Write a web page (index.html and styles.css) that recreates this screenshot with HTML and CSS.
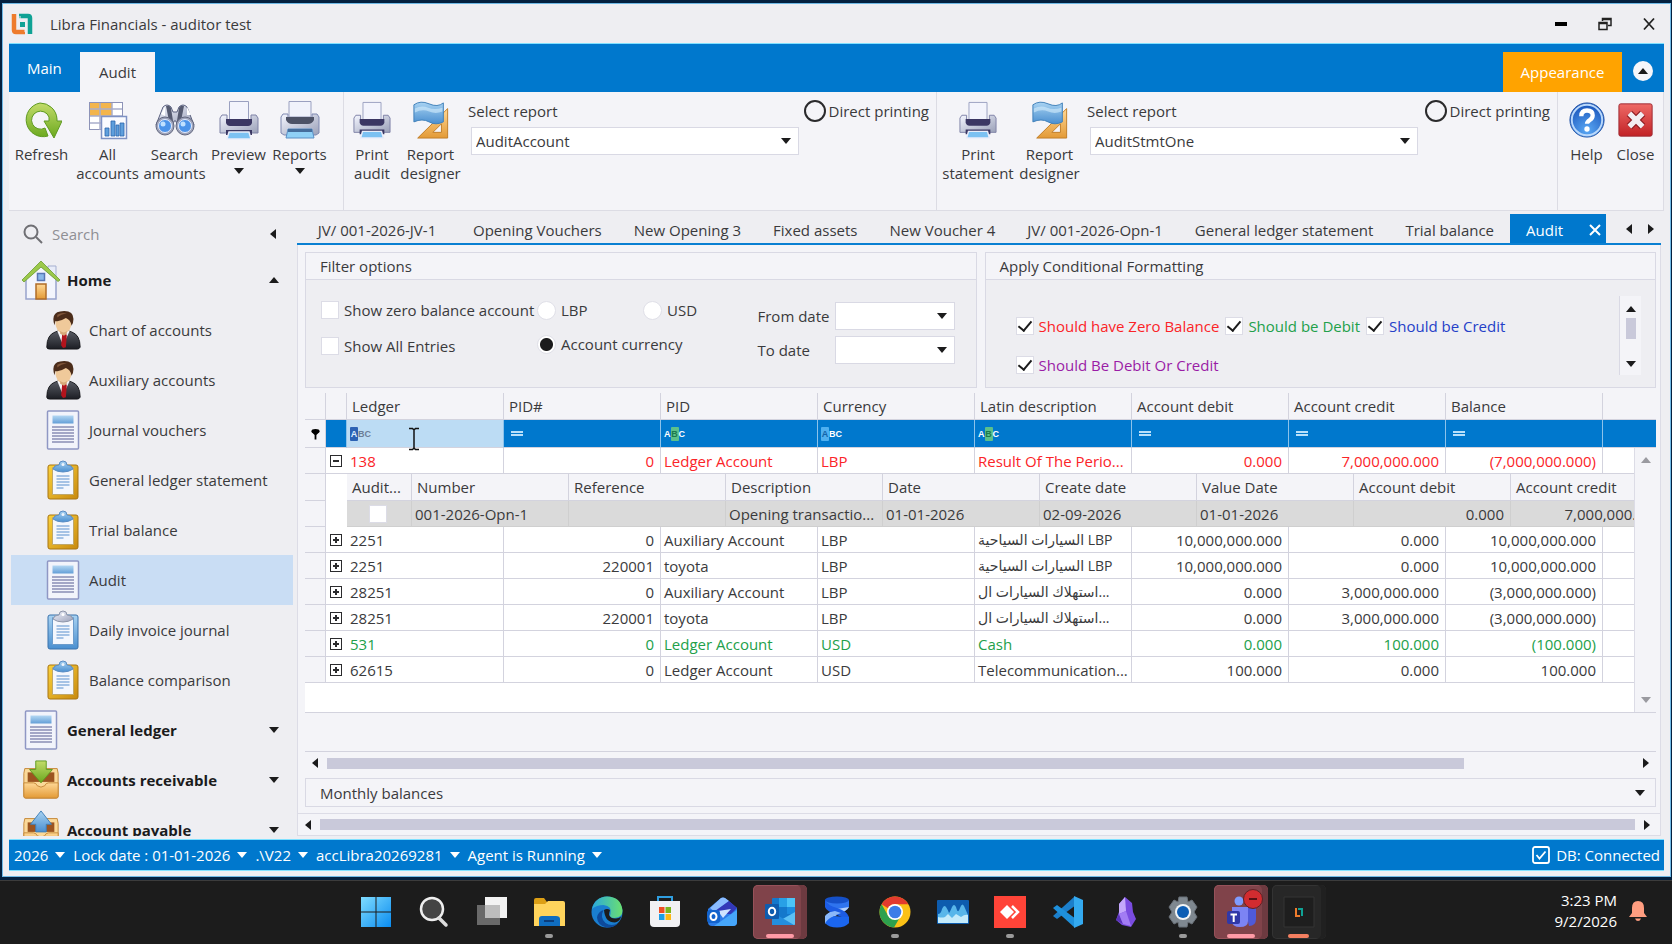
FILE: index.html
```html
<!DOCTYPE html>
<html lang="en">
<head>
<meta charset="utf-8">
<title>Libra Financials - auditor test</title>
<link rel="stylesheet" href="styles.css">
</head>
<body>
<svg class="defs" aria-hidden="true">
  <defs>
    <linearGradient id="gGreen" x1="0" y1="0" x2="0" y2="1"><stop offset="0" stop-color="#c3dc6a"/><stop offset="1" stop-color="#6aa81e"/></linearGradient>
    <linearGradient id="gBlue" x1="0" y1="0" x2="0" y2="1"><stop offset="0" stop-color="#a9d3f2"/><stop offset="1" stop-color="#4a8fd0"/></linearGradient>
    <linearGradient id="gSilver" x1="0" y1="0" x2="1" y2="1"><stop offset="0" stop-color="#f4f6ff"/><stop offset="1" stop-color="#9aa0b8"/></linearGradient>
    <linearGradient id="gOrange" x1="0" y1="0" x2="0" y2="1"><stop offset="0" stop-color="#ffd896"/><stop offset="1" stop-color="#e39a36"/></linearGradient>
    <linearGradient id="gRed" x1="0" y1="0" x2="0" y2="1"><stop offset="0" stop-color="#ee6a66"/><stop offset="1" stop-color="#c22226"/></linearGradient>
    <linearGradient id="gSuit" x1="0" y1="0" x2="0" y2="1"><stop offset="0" stop-color="#5c5f68"/><stop offset="1" stop-color="#1c1e24"/></linearGradient>
    <linearGradient id="gGold" x1="0" y1="0" x2="1" y2="1"><stop offset="0" stop-color="#fbd23c"/><stop offset="1" stop-color="#c88a10"/></linearGradient>
    <linearGradient id="gWin" x1="0" y1="0" x2="1" y2="1"><stop offset="0" stop-color="#7fdcff"/><stop offset="1" stop-color="#0a8cf0"/></linearGradient>
    <linearGradient id="gEdge" x1="0" y1="0" x2="1" y2="0"><stop offset="0" stop-color="#2aa8dc"/><stop offset="1" stop-color="#6be070"/></linearGradient>
    <radialGradient id="gHelp" cx=".5" cy=".8" r=".8"><stop offset="0" stop-color="#5aa8f4"/><stop offset="1" stop-color="#1650b8"/></radialGradient>
  </defs>
  <symbol id="logo" viewBox="0 0 22 22">
    <path d="M3 1v16q0 2 2 2h9" fill="none" stroke="#ee7b2c" stroke-width="4.500"/>
    <path d="M8 3h9q2 0 2 2v16" fill="none" stroke="#0fa295" stroke-width="4.500"/>
    <path d="M9 3v4M14 15v4" stroke="#eeeef2" stroke-width="1"/>
    <rect x="9" y="9" width="5" height="5" fill="#0fa295"/>
  </symbol>
  <symbol id="refresh" viewBox="0 0 40 40">
    <path d="M18 3a17 17 0 1 0 8 33l-3-8a9 9 0 1 1 4-11v4h-5l10 17 8-17h-5v-2A17 17 0 0 0 18 3z" fill="url(#gGreen)" stroke="#5f9a22"/>
  </symbol>
  <symbol id="accounts" viewBox="0 0 40 40">
    <rect x="1.500" y="2.500" width="33" height="27" fill="#fff" stroke="#8d93b8"/>
    <path d="M2 3h22v13H2z" fill="#f3b54c"/><path d="M2 9h32M2 16h32M2 23h32M12 3v27M24 3v27" stroke="#a9aecb" stroke-width="1.500"/>
    <rect x="13.500" y="16.500" width="25" height="22" fill="#fafbff" stroke="#7f92c4" stroke-width="1.500"/>
    <path d="M17 28h4v8h-4zM23 21h4v15h-4zM28 25h3v11h-3zM32 23h4v13h-4z" fill="#5f9fdc" stroke="#2c66ac" stroke-width=".8"/>
  </symbol>
  <symbol id="binoc" viewBox="0 0 40 40">
    <path d="M8 7q4-4 8 0l2 5h4l2-5q4-4 8 0l7 18H22l-1-4h-2l-1 4H1z" fill="url(#gSilver)" stroke="#5c6280"/>
    <path d="M11 6q4-1 5 2l2 13h-4z" fill="#555a70"/><path d="M29 6q-4-1-5 2l-2 13h4z" fill="#555a70"/><path d="M6 14l4-7v9zM32 7l4 8-4 0z" fill="#fff"/>
    <circle cx="10" cy="26" r="9" fill="#9fa4ba" stroke="#62677f"/><circle cx="30" cy="26" r="9" fill="#9fa4ba" stroke="#62677f"/>
    <circle cx="10" cy="26" r="6.500" fill="#4b93ea" stroke="#e4ecff"/><circle cx="30" cy="26" r="6.500" fill="#4b93ea" stroke="#e4ecff"/>
    <circle cx="8" cy="24" r="2.500" fill="#bfe0ff"/><circle cx="28" cy="24" r="2.500" fill="#bfe0ff"/>
  </symbol>
  <symbol id="printer" viewBox="0 0 40 40">
    <path d="M3 15h5v7h24v-7h5l2 3v15H1V18z" fill="url(#gSilver)" stroke="#7e82a6"/>
    <path d="M10.500 1.500h19V20h-19z" fill="#f3f4fc" stroke="#9aa0c0"/><path d="M7 19h26v4q-1 3-4 3H11q-3 0-4-3z" fill="#3b3763"/>
    <rect x="7" y="30" width="26" height="5" fill="#3b3763"/><path d="M10 32h20l2 7H8z" fill="#7cc1f2" stroke="#e9edfa" stroke-width="1.500"/>
  </symbol>
  <symbol id="printer2" viewBox="0 0 40 40">
    <path d="M3 14h5v7h24v-7h5l2 3v16l-3 2H4l-3-2V17z" fill="url(#gSilver)" stroke="#7e88b0"/>
    <path d="M9 1.500h22V17H9z" fill="#f0f2fb" stroke="#9aa0c0"/><path d="M6 17h28v3q-2 4-6 4H12q-4 0-6-4z" fill="#4d5266"/>
    <path d="M8 29h24l2 9H6z" fill="#8fd0f6" stroke="#5a8fc4"/><path d="M8 29h24v3H8z" fill="#456d9c"/>
  </symbol>
  <symbol id="designer" viewBox="0 0 40 40">
    <path d="M37.500 8v31H6z" fill="url(#gOrange)" stroke="#c07c26"/><path d="M31 24v9h-9z" fill="#f4f4f8" stroke="#c07c26"/>
    <path d="M2 4q7-5 16-1t15-1v20q-8 4-15 0T2 22z" fill="url(#gBlue)" stroke="#3f7fb8"/><path d="M3 8q7-4 14-1t15 0v4q-7 3-14 0T3 12z" fill="#d4ecfc" opacity=".6"/>
  </symbol>
  <symbol id="help" viewBox="0 0 40 40">
    <circle cx="20" cy="20" r="18" fill="url(#gHelp)" stroke="#2a58a8"/><circle cx="20" cy="20" r="16" fill="none" stroke="#b9d8fb" stroke-width="2"/>
    <path d="M14 16q0-6 6-6t6 5q0 3-3 5t-3 4" fill="none" stroke="#fff" stroke-width="4.500"/><circle cx="20" cy="29.500" r="2.800" fill="#fff"/>
  </symbol>
  <symbol id="closeRed" viewBox="0 0 40 40">
    <rect x="2" y="3" width="35" height="34" rx="2" fill="url(#gRed)" stroke="#9c2a34"/><path d="M13 13l14 14M27 13L13 27" stroke="#8e1c22" stroke-width="8"/><path d="M13 13l14 14M27 13L13 27" stroke="#f3eef2" stroke-width="5.500"/>
  </symbol>
  <symbol id="house" viewBox="0 0 40 40">
    <path d="M27 6h8v14h-8z" fill="#e8ecf8" stroke="#a5afd0"/><path d="M5 19L20 6l15 13v20H5z" fill="#f3f5fc" stroke="#98a3cc" stroke-width="1.500"/>
    <path d="M1 20L20 1l19 19-2 1.500L20 7 3 22z" fill="#9cc94a" stroke="#6c9c30" stroke-width=".8"/>
    <rect x="16.500" y="13.500" width="7" height="7" fill="#8bb8ea" stroke="#5876b4" stroke-width="1.500"/><rect x="15" y="24" width="10" height="15" fill="url(#gOrange)" stroke="#b06c28" stroke-width="1.500"/>
  </symbol>
  <symbol id="person" viewBox="0 0 40 42">
    <path d="M3 39q0-13 9-16l7-2h3l7 2q9 3 9 16-1 2-3 2H6q-3 0-3-2z" fill="url(#gSuit)" stroke="#15161a"/>
    <path d="M14 22l6 15 7-15z" fill="#f4f4f8"/><path d="M19 24h4l1 3-1 12-3 1-2-3 1-10z" fill="#b3131c"/>
    <path d="M12 12q0 11 8.500 13Q29 23 29 12l-3-5H15z" fill="#efc99a"/><path d="M17 22q4 3 7 0v3l-3 2-4-2z" fill="#d7a878"/>
    <path d="M11 16Q7 3 17 1.500q14-2 14 8 0 4-2 7-1-6-6-8-6 4-11 3z" fill="#4b2c1a"/><path d="M14 5q5-3 10-1-6 0-10 4z" fill="#80563a"/>
  </symbol>
  <symbol id="doc" viewBox="0 0 36 40">
    <rect x="2.500" y="1" width="31" height="38" rx="1" fill="#f2f4fb" stroke="#8f97c4" stroke-width="1.500"/><rect x="7.500" y="5.500" width="21" height="8" fill="url(#gBlue)" opacity=".85"/>
    <path d="M7 17h22M7 20h22M7 23h22M7 26h22M7 29h22M7 32h22" stroke="#a3a7c6" stroke-width="1.800"/>
  </symbol>
  <symbol id="clip" viewBox="0 0 36 40">
    <rect x="3" y="5" width="30" height="34" rx="2" fill="url(#gGold)" stroke="#a77412"/><path d="M7.500 7.500h21v27h-21z" fill="#f4f7fd" stroke="#bfa76a"/>
    <path d="M11.500 16h13M11.500 19h13M11.500 22h13M11.500 25h13M11.500 28h7" stroke="#8cb2dd" stroke-width="1.500"/><path d="M8 9q1-4 6-4 0-4 4-4t4 4q5 0 6 4-4 3-10 3T8 9z" fill="url(#gBlue)" stroke="#5a8dc4"/><circle cx="18" cy="4.500" r="1.500" fill="#eef4fc"/>
  </symbol>
  <symbol id="clipBlue" viewBox="0 0 36 40">
    <rect x="3" y="5" width="30" height="34" rx="2" fill="url(#gBlue)" stroke="#3a72ac"/><path d="M7.500 7.500h21v27h-21z" fill="#f4f7fd" stroke="#6b9bcb"/>
    <path d="M11.500 16h13M11.500 19h13M11.500 22h13M11.500 25h13M11.500 28h7" stroke="#8cb2dd" stroke-width="1.500"/><path d="M8 9q1-4 6-4 0-4 4-4t4 4q5 0 6 4-4 3-10 3T8 9z" fill="url(#gSilver)" stroke="#8e96aa"/><circle cx="18" cy="4.500" r="1.500" fill="#fff"/>
  </symbol>
  <symbol id="trayIn" viewBox="0 0 40 42">
    <path d="M3 9h34l1 5v24q0 2-2 2H4q-2 0-2-2V14z" fill="#fbd999" stroke="#c48738"/><path d="M6 13h28v10H6z" fill="#9c5420"/>
    <path d="M2 24h10q3 0 4 3 4 3 8 0 1-3 4-3h10v14q0 2-2 2H4q-2 0-2-2z" fill="url(#gOrange)" stroke="#c48738"/><path d="M14.500 1h11v9H32L20 24 8 10h6.500z" fill="url(#gGreen)" stroke="#5f9a22"/>
  </symbol>
  <symbol id="trayOut" viewBox="0 0 40 42">
    <path d="M3 9h34l1 5v24q0 2-2 2H4q-2 0-2-2V14z" fill="#fbd999" stroke="#c48738"/><path d="M6 13h28v10H6z" fill="#9c5420"/>
    <path d="M2 24h10q3 0 4 3 4 3 8 0 1-3 4-3h10v14H2z" fill="url(#gOrange)" stroke="#c48738"/><path d="M20 1l11 14h-5.500v8h-11v-8H9z" fill="url(#gBlue)" stroke="#3f7fb8"/>
  </symbol>
</svg>

<main class="window">
  <header class="titlebar">
    <svg class="logo"><use href="#logo"/></svg>
    <h1>Libra Financials - auditor test</h1>
    <div class="winbtns">
      <button aria-label="Minimize"><svg viewBox="0 0 14 14"><path d="M1 5h12v4H1z"/></svg></button>
      <button aria-label="Restore"><svg viewBox="0 0 14 14" fill="none" stroke="#222" stroke-width="1.500"><path d="M1 5.500h8v7H1z M1 6.500h8M4.500 4V1.500H13v7H10M4.500 2.500H13"/></svg></button>
      <button aria-label="Close"><svg viewBox="0 0 14 14" fill="none" stroke="#222" stroke-width="1.800"><path d="M2 1.500l10 11M12 1.500l-10 11"/></svg></button>
    </div>
  </header>

  <nav class="ribbon-tabs">
    <button class="rtab main">Main</button>
    <button class="rtab current">Audit</button>
    <button class="rtab appearance">Appearance</button>
    <button class="collapse" aria-label="Collapse ribbon"><i class="up"></i></button>
  </nav>

  <section class="ribbon">
    <div class="group group-a">
      <button class="big refresh"><svg><use href="#refresh"/></svg>Refresh</button>
      <button class="big accts"><svg><use href="#accounts"/></svg>All<br>accounts</button>
      <button class="big search-am"><svg><use href="#binoc"/></svg>Search<br>amounts</button>
      <button class="big"><svg><use href="#printer"/></svg>Preview<i class="down"></i></button>
      <button class="big"><svg><use href="#printer2"/></svg>Reports<i class="down"></i></button>
    </div>
    <div class="group group-b">
      <button class="big print"><svg><use href="#printer"/></svg>Print<br>audit</button>
      <button class="big"><svg><use href="#designer"/></svg>Report<br>designer</button>
      <div class="report">
        <label for="rep1">Select report</label>
        <div class="combo"><select id="rep1"><option>AuditAccount</option></select><i class="down"></i></div>
      </div>
      <label class="direct"><input type="radio" name="dp1">Direct printing</label>
    </div>
    <div class="group group-c">
      <button class="big stmt"><svg><use href="#printer"/></svg>Print<br>statement</button>
      <button class="big"><svg><use href="#designer"/></svg>Report<br>designer</button>
      <div class="report">
        <label for="rep2">Select report</label>
        <div class="combo"><select id="rep2"><option>AuditStmtOne</option></select><i class="down"></i></div>
      </div>
      <label class="direct"><input type="radio" name="dp2">Direct printing</label>
    </div>
    <div class="group group-d">
      <button class="big help"><svg><use href="#help"/></svg>Help</button>
      <button class="big help"><svg><use href="#closeRed"/></svg>Close</button>
    </div>
  </section>

  <div class="workspace">
    <aside class="sidebar">
      <div class="search">
        <svg viewBox="0 0 20 20" fill="none" stroke="#6f6f74" stroke-width="2"><circle cx="8" cy="8" r="6.500"/><path d="M13 13l6 6"/></svg>
        <input type="text" placeholder="Search" aria-label="Search">
        <i class="left"></i>
      </div>
      <nav class="tree">
        <button class="top"><svg><use href="#house"/></svg><span>Home</span><i class="up"></i></button>
        <a href="#"><svg><use href="#person"/></svg>Chart of accounts</a>
        <a href="#"><svg><use href="#person"/></svg>Auxiliary accounts</a>
        <a href="#"><svg><use href="#doc"/></svg>Journal vouchers</a>
        <a href="#"><svg><use href="#clip"/></svg>General ledger statement</a>
        <a href="#"><svg><use href="#clip"/></svg>Trial balance</a>
        <a href="#" class="active"><svg><use href="#doc"/></svg>Audit</a>
        <a href="#"><svg><use href="#clipBlue"/></svg>Daily invoice journal</a>
        <a href="#"><svg><use href="#clip"/></svg>Balance comparison</a>
        <button class="top"><svg><use href="#doc"/></svg><span>General ledger</span><i class="down"></i></button>
        <button class="top"><svg><use href="#trayIn"/></svg><span>Accounts receivable</span><i class="down"></i></button>
        <button class="top"><svg><use href="#trayOut"/></svg><span>Account payable</span><i class="down"></i></button>
      </nav>
    </aside>

    <section class="docs">
      <div class="doc-tabs">
        <button class="first">JV/ 001-2026-JV-1</button>
        <button>Opening Vouchers</button>
        <button>New Opening 3</button>
        <button>Fixed assets</button>
        <button>New Voucher 4</button>
        <button>JV/ 001-2026-Opn-1</button>
        <button>General ledger statement</button>
        <button>Trial balance</button>
        <button class="selected">Audit <svg viewBox="0 0 12 12" fill="none" stroke="#fff" stroke-width="2"><path d="M1 1l10 10M11 1L1 11"/></svg></button>
        <div class="tab-nav"><i class="left"></i><i class="right"></i></div>
      </div>

      <div class="doc-body">
        <div class="pad">
          <div class="panels">
            <section class="panel">
              <h2>Filter options</h2>
              <div class="filters">
                <div class="checks">
                  <label><input type="checkbox"><span>Show zero balance account</span></label>
                  <label><input type="checkbox"><span>Show All Entries</span></label>
                </div>
                <div class="radios">
                  <label><input type="radio" name="cur">LBP</label>
                  <label><input type="radio" name="cur">USD</label>
                  <label class="wide"><input type="radio" name="cur" checked>Account currency</label>
                </div>
                <div class="dates">
                  <label for="from">From date</label><div class="combo"><input id="from" type="text"><i class="down"></i></div>
                  <label for="to">To date</label><div class="combo"><input id="to" type="text"><i class="down"></i></div>
                </div>
              </div>
            </section>
            <section class="panel">
              <h2>Apply Conditional Formatting</h2>
              <div class="cond">
                <div class="cond-list">
                  <label class="red"><input type="checkbox" checked>Should have Zero Balance</label>
                  <label class="green"><input type="checkbox" checked>Should be Debit</label>
                  <label class="blue"><input type="checkbox" checked>Should be Credit</label>
                  <label class="purple"><input type="checkbox" checked>Should Be Debit Or Credit</label>
                </div>
                <div class="vscroll"><i class="up"></i><b></b><i class="down"></i></div>
              </div>
            </section>
          </div>

          <div class="grid">
            <table class="ledger">
              <colgroup><col class="c-ind"><col class="c-exp"><col class="c-std"><col class="c-std"><col class="c-std"><col class="c-std"><col class="c-std"><col class="c-std"><col class="c-std"><col class="c-std"><col></colgroup>
              <thead>
                <tr><th></th><th></th><th>Ledger</th><th>PID#</th><th>PID</th><th>Currency</th><th>Latin description</th><th>Account debit</th><th>Account credit</th><th>Balance</th><th class="end"></th></tr>
                <tr class="filter">
                  <td class="ind"><svg class="funnel" viewBox="0 0 10 12"><ellipse cx="5" cy="3" rx="4.500" ry="2.500"/><path d="M1 4l3 3v5h2V7l3-3z"/></svg></td>
                  <td></td>
                  <td class="hot"><div class="fcell dark"><b class="b">A</b>BC<input type="text" aria-label="Filter ledger"></div></td>
                  <td><div class="fcell"><s></s><input type="text" aria-label="Filter PID number"></div></td>
                  <td><div class="fcell">A<b class="g">B</b>C<input type="text" aria-label="Filter PID"></div></td>
                  <td><div class="fcell"><b class="l">A</b>BC<input type="text" aria-label="Filter currency"></div></td>
                  <td><div class="fcell">A<b class="g">B</b>C<input type="text" aria-label="Filter description"></div></td>
                  <td><div class="fcell"><s></s><input type="text" aria-label="Filter debit"></div></td>
                  <td><div class="fcell"><s></s><input type="text" aria-label="Filter credit"></div></td>
                  <td><div class="fcell"><s></s><input type="text" aria-label="Filter balance"></div></td>
                  <td></td>
                </tr>
              </thead>
              <tbody>
                <tr class="red"><td class="ind"></td><td><button class="exp minus" aria-label="Collapse"></button></td><td>138</td><td class="n">0</td><td>Ledger Account</td><td>LBP</td><td>Result Of The Perio...</td><td class="n">0.000</td><td class="n">7,000,000.000</td><td class="n">(7,000,000.000)</td><td></td></tr>
                <tr class="detail"><td class="ind"><div class="rowline"></div></td><td class="blank"></td><td class="nest" colspan="9">
                  <table class="sub">
                    <colgroup><col class="c-aud"><col class="c-std"><col class="c-std"><col class="c-std"><col class="c-std"><col class="c-std"><col class="c-std"><col class="c-std"><col class="c-std"></colgroup>
                    <thead><tr><th>Audit...</th><th>Number</th><th>Reference</th><th>Description</th><th>Date</th><th>Create date</th><th>Value Date</th><th>Account debit</th><th>Account credit</th></tr></thead>
                    <tbody><tr><td class="mid"><input type="checkbox" aria-label="Audited"></td><td>001-2026-Opn-1</td><td></td><td>Opening transactio...</td><td>01-01-2026</td><td>02-09-2026</td><td>01-01-2026</td><td class="n">0.000</td><td class="n">7,000,000.000</td></tr></tbody>
                  </table>
                </td></tr>
                <tr><td class="ind"></td><td><button class="exp" aria-label="Expand"></button></td><td>2251</td><td class="n">0</td><td>Auxiliary Account</td><td>LBP</td><td class="ar">السيارات السياحية LBP</td><td class="n">10,000,000.000</td><td class="n">0.000</td><td class="n">10,000,000.000</td><td></td></tr>
                <tr><td class="ind"></td><td><button class="exp" aria-label="Expand"></button></td><td>2251</td><td class="n">220001</td><td>toyota</td><td>LBP</td><td class="ar">السيارات السياحية LBP</td><td class="n">10,000,000.000</td><td class="n">0.000</td><td class="n">10,000,000.000</td><td></td></tr>
                <tr><td class="ind"></td><td><button class="exp" aria-label="Expand"></button></td><td>28251</td><td class="n">0</td><td>Auxiliary Account</td><td>LBP</td><td class="ar">استهلاك السيارات ال...</td><td class="n">0.000</td><td class="n">3,000,000.000</td><td class="n">(3,000,000.000)</td><td></td></tr>
                <tr><td class="ind"></td><td><button class="exp" aria-label="Expand"></button></td><td>28251</td><td class="n">220001</td><td>toyota</td><td>LBP</td><td class="ar">استهلاك السيارات ال...</td><td class="n">0.000</td><td class="n">3,000,000.000</td><td class="n">(3,000,000.000)</td><td></td></tr>
                <tr class="green"><td class="ind"></td><td><button class="exp" aria-label="Expand"></button></td><td>531</td><td class="n">0</td><td>Ledger Account</td><td>USD</td><td>Cash</td><td class="n">0.000</td><td class="n">100.000</td><td class="n">(100.000)</td><td></td></tr>
                <tr><td class="ind"></td><td><button class="exp" aria-label="Expand"></button></td><td>62615</td><td class="n">0</td><td>Ledger Account</td><td>USD</td><td>Telecommunication...</td><td class="n">100.000</td><td class="n">0.000</td><td class="n">100.000</td><td></td></tr>
              </tbody>
            </table>
            <div class="grid-scroll"><i class="up"></i><i class="down"></i></div>
            <svg class="ibeam" viewBox="0 0 12 24" fill="none" stroke="#111" stroke-width="1.500"><path d="M1 1.500h3.500L6 3l1.500-1.500H11M1 22.500h3.500L6 21l1.500 1.500H11M6 3v18"/></svg>
          </div>
          <div class="grid-foot"></div>
          <div class="hscroll short"><i class="left"></i><div class="track"><b></b></div><i class="right"></i></div>
          <button class="monthly">Monthly balances<i class="down"></i></button>
        </div>
        <div class="hscroll outer"><i class="left"></i><div class="track"><b></b></div><i class="right"></i></div>
      </div>
    </section>
  </div>

  <footer class="status">
    <button>2026<i class="down"></i></button>
    <button>Lock date : 01-01-2026<i class="down"></i></button>
    <button>.\V22<i class="down"></i></button>
    <button>accLibra20269281<i class="down"></i></button>
    <button>Agent is Running<i class="down"></i></button>
    <span class="db"><svg viewBox="0 0 18 18" fill="none" stroke="#fff" stroke-width="1.800"><rect x="1" y="1" width="16" height="16" rx="2"/><path d="M4.500 9l3 3.500 6-7"/></svg>DB: Connected</span>
  </footer>
</main>

<footer class="taskbar">
  <nav class="apps">
    <button aria-label="Start"><svg viewBox="0 0 32 32" fill="url(#gWin)"><path d="M1 1h14.500v14.500H1zM16.500 1H31v14.500H16.500zM1 16.500h14.500V31H1zM16.500 16.500H31V31H16.500z"/></svg></button>
    <button aria-label="Search"><svg viewBox="0 0 32 32"><circle cx="14" cy="13" r="11" fill="#444" stroke="#eee" stroke-width="2.500"/><path d="M21 22l7 7" stroke="#ddd" stroke-width="3.500" stroke-linecap="round"/></svg></button>
    <button aria-label="Task view"><svg viewBox="0 0 32 32"><rect x="9" y="1" width="22" height="21" fill="#f2f2f2"/><rect x="1" y="9" width="23" height="20" fill="#777" opacity=".85"/><rect x="9" y="9" width="15" height="13" fill="#bdbdbd"/></svg></button>
    <button class="run" aria-label="File Explorer"><svg viewBox="0 0 32 32"><path d="M1 4q0-2 2-2h8l3 4h16q1 0 1 2v22H1z" fill="#dc9f15"/><path d="M1 8h11l3-3h15q2 0 2 2v23H1z" fill="#ffd45c"/><path d="M6 30v-7q0-3 3-3h14q4 0 4 3v7z" fill="#0f6dc0"/><path d="M11 25h10" stroke="#0a3d7c" stroke-width="2"/></svg></button>
    <button aria-label="Edge"><svg viewBox="0 0 32 32"><circle cx="16" cy="16" r="15.500" fill="#1a7fd0"/><path d="M1 13Q4 1 16 .5q14 0 15.500 14 0 7-8 7.500-6 0-4-4 2-8-7-9-7 0-11.500 4z" fill="url(#gEdge)"/><path d="M12.500 14q-4 8 2 13 6 4 13 0-5 5-12 4.500-9-2-9.500-10 1-6 6.500-7.500z" fill="#0d4a9c"/><path d="M13 14q3-2 6 0-1 3-1 5 2 4 7 3.500 3 0 5-2-1 5-6 6-10 0-11-12.500z" fill="#1c1c1c"/></svg></button>
    <button aria-label="Store"><svg viewBox="0 0 32 32"><path d="M9 6V1h14v5" fill="none" stroke="#2f9ee0" stroke-width="2"/><path d="M1 5h30v22q0 4-4 4H5q-4 0-4-4z" fill="#f1f1f3"/><path d="M10 11h5.500v6H10z" fill="#f04e23"/><path d="M16.500 11H22v6h-5.500z" fill="#7ab51d"/><path d="M10 18h5.500v6H10z" fill="#1c9ee6"/><path d="M16.500 18H22v6h-5.500z" fill="#fcb815"/></svg></button>
    <button aria-label="Mail"><svg viewBox="0 0 32 32"><path d="M2 13L15 2q2-1 4 0l12 10v14q0 4-4 4H6q-4 0-4-4z" fill="#2c7be8"/><path d="M4 12L15 2q2-1 4 0l4 3-14 11z" fill="#8bbcff"/><path d="M23 5l8 7-6 6H12L9 15z" fill="#3338b8"/><path d="M12 15l13-2-8 9z" fill="#cfe3ff"/><path d="M8 30l23-16v12q0 4-4 4z" fill="#46a6fa"/><rect x="1" y="14" width="13" height="13" rx="3" fill="#1263cc"/><ellipse cx="7.500" cy="20.500" rx="3" ry="3.500" fill="none" stroke="#fff" stroke-width="2"/></svg></button>
    <button class="tile pink" aria-label="Outlook"><svg viewBox="0 0 32 32"><rect x="8" y="2" width="23" height="27" rx="1" fill="#1478cc"/><path d="M15 2h8v9h-8z" fill="#28a0e6"/><path d="M23 2h8v9h-8z" fill="#4cc4f8"/><path d="M23 11h8v7h-8z" fill="#1c8ce0"/><path d="M8 29l23-13v12q0 1-1 1z" fill="#5cc0f5"/><path d="M8 16l22 13H8z" fill="#248ede"/><rect x="1" y="8" width="14" height="15" rx="1" fill="#0f5cae"/><ellipse cx="8" cy="15.500" rx="3.200" ry="3.800" fill="none" stroke="#fff" stroke-width="2"/></svg></button>
    <button aria-label="Database client"><svg viewBox="0 0 32 32"><path d="M4 4q12 6 24 0v7q-2 4-12 8T4 28v-7q2-4 12-8Q6 10 4 6z" fill="#2f74ee"/><path d="M28 11q-2 4-12 8T4 28v-7q2-4 12-8z" fill="#b3d0fb"/><path d="M4 4q2 5 12 8t12 9v7q-1-5-12-9T4 11z" fill="#1c5ce4"/><ellipse cx="16" cy="4" rx="12" ry="3.500" fill="#1550c8"/><path d="M4 27q2-5 8-7l16 1v6q-4 4.500-12 4.500T4 27z" fill="#1b66ee"/><path d="M4 20q3-4 10-5l6 2q-12 4-16 10z" fill="#8ab8fa"/></svg></button>
    <button class="run" aria-label="Chrome"><svg viewBox="0 0 32 32"><circle cx="16" cy="16" r="15.500" fill="#fbc116"/><path d="M2.600 8.200A15.500 15.500 0 0 1 29.400 8.200H16a8 8 0 0 0-7 4z" fill="#e33b2e"/><path d="M2.600 8.200A15.500 15.500 0 0 0 15 31.500l7-12a8 8 0 0 1-13 0z" fill="#2da14e"/><circle cx="16" cy="16" r="8" fill="#fff"/><circle cx="16" cy="16" r="6.300" fill="#3b7de8"/></svg></button>
    <button aria-label="Performance monitor"><svg viewBox="0 0 32 32"><rect y="4" width="32" height="24" rx="1" fill="#0d5cae"/><path d="M1 18q3 0 4-5 2-5 4-2t3 6q1-1 3-6 2-4 4 0 2 8 4 1 2-6 4-2l4 9v8H1z" fill="#58b6ea"/><path d="M1 21q4 1 7 0l3-3 4 4 4-4 5 3q4-3 7-2v8H1z" fill="#c4ebfb"/></svg></button>
    <button class="run" aria-label="AnyDesk"><svg viewBox="0 0 32 32"><rect x="0" y="0" width="32" height="32" fill="#ff4438"/><path d="M13 9l7 7-7 7-7-7z" fill="#fff"/><path d="M18 10l6 6-6 6" fill="none" stroke="#fff" stroke-width="2.500"/></svg></button>
    <button aria-label="Visual Studio Code"><svg viewBox="0 0 32 32"><path d="M22 1L1 20l4 3L24 9z" fill="#1c7fcb"/><path d="M22 31L1 12l4-3 19 14z" fill="#1e90dc"/><path d="M22 0l9 4v24l-9 4z" fill="#34aaf0"/></svg></button>
    <button aria-label="Obsidian"><svg viewBox="0 0 32 32"><path d="M15 1l7 6 1 9 3 7-5 8-9-2-6-5 3-8 0-8z" fill="#7a4ce0"/><path d="M15 1l1 14-7 3V8z" fill="#c4a8fb"/><path d="M9 18l4 10-7-4z" fill="#5a34b8"/><path d="M16 15l5 15-8-2-4-10z" fill="#a27cf4"/></svg></button>
    <button class="run" aria-label="Settings"><svg viewBox="0 0 32 32"><path d="M12 1h8l1 5 4-2 5 7-3 5 3 5-5 7-4-2-1 5h-8l-1-5-4 2-5-7 3-5-3-5 5-7 4 2z" fill="#7f8890" stroke="#697078"/><circle cx="16" cy="16" r="8" fill="#f2f4f6"/><circle cx="16" cy="16" r="6" fill="#0c5db4"/></svg></button>
    <button class="tile pink" aria-label="Teams"><svg viewBox="0 0 32 32"><circle cx="14" cy="5" r="4.500" fill="#7f9cff"/><path d="M20 12h11v11q0 7-7 7z" fill="#4f5ad8"/><path d="M7 11h16v14q0 6-8 6t-8-6z" fill="#7c84f4"/><rect x="2" y="15" width="13" height="13" rx="2" fill="#3038a8"/><path d="M5.500 18.500h6.500M8.700 18.500V26" stroke="#fff" stroke-width="2"/></svg><em><u></u></em></button>
    <button class="tile dark" aria-label="Libra Financials"><svg viewBox="0 0 32 32"><path d="M1 1h30v30H1z" fill="#1e1e1e" stroke="#343434"/><path d="M13 12v8h4" fill="none" stroke="#ee7b2c" stroke-width="2"/><path d="M15 13h4v7" fill="none" stroke="#0fa295" stroke-width="2"/></svg></button>
  </nav>
  <div class="clock"><div><time>3:23 PM</time><time>9/2/2026</time></div>
    <svg viewBox="0 0 18 20"><path d="M9 0Q3 0 3 7v5l-3 4h18l-3-4V7q0-7-6-7zM6 17.500h6Q11 20 9 20t-3-2.500z" fill="#ff9d80"/></svg>
  </div>
</footer>
</body>
</html>
```
FILE: styles.css
```css
* { box-sizing: border-box; }

body {
  margin: 0;
  height: 100vh;
  display: flex;
  flex-direction: column;
  overflow: hidden;
  background: #03203f;
  color: #3a3a3c;
  font: 15px/20px "Open Sans", "DejaVu Sans", sans-serif;
}

button, input, select { font: inherit; color: inherit; }
button { border: 0; padding: 0; background: none; }
a { color: inherit; text-decoration: none; }
.defs { position: absolute; width: 0; height: 0; }

/* carets */
i { display: block; flex: none; width: 0; height: 0; border: 5px solid transparent; }
i.down { border-top: 6px solid #1b1b1c; border-bottom: 0; }
i.up { border-bottom: 6px solid #1b1b1c; border-top: 0; }
i.left { border-right: 6px solid #1b1b1c; border-left: 0; }
i.right { border-left: 6px solid #1b1b1c; border-right: 0; }

.window {
  flex: 1;
  min-height: 0;
  display: flex;
  flex-direction: column;
  margin: 3px 1px 3px 2px;
  padding: 0 6px 5px;
  border: 1px solid #6fb9e6;
  background: #eeeef2;
}

.titlebar { display: flex; align-items: center; height: 39px; flex: none; padding-left: 2px; }
.logo { width: 22px; height: 22px; }
.titlebar h1 { margin: 0 auto 0 17px; font-size: 15px; font-weight: 400; }
.winbtns { display: flex; gap: 30px; padding-right: 8px; }
.winbtns svg { display: block; width: 14px; height: 14px; }

.ribbon-tabs {
  display: flex;
  align-items: flex-end;
  flex: none;
  height: 49px;
  border-top: 1px solid #7fe0ff;
  background: #0078cd;
  color: #fff;
}
.rtab { height: 40px; padding: 0 20px; }
.rtab.main { width: 71px; height: 48px; padding: 0 22px 0 18px; }
.rtab.current { width: 75px; padding: 0; background: #f4f4f8; color: #3a3a3c; }
.rtab.appearance { width: 119px; margin-left: auto; padding: 0; background: #ffa300; }
.collapse {
  display: grid;
  place-items: center;
  width: 20px;
  height: 20px;
  margin: 0 11px 11px;
  border-radius: 50%;
  background: #f6f6fa;
}

.ribbon { display: flex; flex: none; height: 119px; border-bottom: 1px solid #dcdce4; background: #f4f4f8; }
.group { display: flex; align-items: flex-start; border-right: 1px solid #dcdce4; padding-top: 7px; }
.group-a { width: 335px; }
.group-b { width: 593px; }
.group-c { width: 621px; }
.group-d { flex: 1; padding-left: 4px; }
.big { display: flex; flex-direction: column; align-items: center; width: 61px; line-height: 19px; }
.big svg { width: 40px; height: 42px; margin-bottom: 4px; }
.big i { margin-top: 4px; }
.refresh { width: 65px; }
.accts, .search-am { width: 67px; }
.print { width: 56px; }
.group-b .big svg, .group-c .big svg { width: 38px; }
.stmt { width: 82px; }
.help { width: 49px; }
.help svg { width: 38px; }
.report { flex: none; width: 329px; padding: 2px 0 0 7px; }
.combo { position: relative; height: 28px; border: 1px solid #d9d9e4; background: #fff; }
.combo select, .combo input { width: 100%; height: 100%; border: 0; padding: 0 4px; background: none; appearance: none; outline: 0; }
.combo i { position: absolute; right: 7px; top: 10px; pointer-events: none; }
.report .combo { width: 328px; margin: 6px 0 0 3px; }
.direct { display: flex; align-items: center; gap: 3px; margin: 1px 0 0 auto; padding-right: 7px; white-space: nowrap; }
input[type=radio] { appearance: none; flex: none; width: 19px; height: 19px; margin: 0; border: 1px solid #e0e0e8; border-radius: 50%; background: #fff; }
.direct input[type=radio] { width: 22px; height: 22px; border: 2px solid #2a2a2c; background: none; }
input[type=radio]:checked { background: radial-gradient(circle, #1b1b1c 6px, #fff 7px); }
input[type=checkbox] { appearance: none; flex: none; display: grid; place-items: center; width: 18px; height: 18px; margin: 0; border: 1px solid #dcdce6; background: #fff; }
input[type=checkbox]:checked::after { content: ""; width: 6px; height: 11px; margin-bottom: 3px; border: solid #1b1b1c; border-width: 0 2px 2px 0; transform: rotate(40deg); }

.workspace { flex: 1; min-height: 0; display: flex; }
.sidebar { flex: none; width: 288px; display: flex; flex-direction: column; min-height: 0; padding: 0 4px 3px 2px; }
.search { display: flex; align-items: center; flex: none; height: 44px; padding: 1px 17px 0 12px; }
.search svg { width: 20px; height: 20px; }
.search input { flex: 1; min-width: 0; border: 0; padding: 0 9px; background: none; outline: 0; }
.search input::placeholder { color: #8f8f94; opacity: 1; }
.tree { flex: 1; min-height: 0; overflow: hidden; }
.tree a, .top { display: flex; align-items: center; width: 100%; height: 50px; }
.tree a { padding-left: 32px; gap: 6px; }
.tree svg { width: 40px; height: 40px; }
.top { padding: 0 14px 0 10px; gap: 6px; font-weight: 700; color: #1b1b1c; }
.top i { margin-left: auto; }
.tree .active { background: #c9ddf4; }

.docs { flex: 1; min-width: 0; display: flex; flex-direction: column; margin: 3px 3px 3px 0; }
.doc-tabs { display: flex; flex: none; height: 31px; border-bottom: 2px solid #0a80d2; white-space: nowrap; }
.doc-tabs button { padding: 3px 16px 0; }
.doc-tabs .first { min-width: 160px; }
.doc-tabs .selected { display: flex; align-items: center; gap: 26px; padding: 2px 5px 0 16px; background: #0078cd; color: #fff; }
.selected svg { width: 12px; height: 12px; }
.tab-nav { display: flex; align-items: center; gap: 16px; margin-left: auto; padding-right: 7px; }

.doc-body { flex: 1; min-height: 0; display: flex; flex-direction: column; border: 1px solid #dcdce6; border-top: 0; background: #f4f4f8; }
.pad { flex: 1; min-height: 0; display: flex; flex-direction: column; padding: 7px 4px 6px 7px; }
.panels { display: grid; grid-template-columns: 1fr 1fr; gap: 8px; height: 135px; flex: none; }
.panel { display: flex; flex-direction: column; min-width: 0; border: 1px solid #d9d9e4; background: #eeeef2; }
.panel h2 { margin: 0; padding: 3px 14px; height: 27px; border-bottom: 1px solid #d9d9e4; background: #f4f4f8; font-size: 15px; font-weight: 400; }
.filters { flex: 1; display: flex; padding: 18px 21px 0 15px; white-space: nowrap; }
.filters label { display: flex; align-items: center; }
.checks { width: 216px; }
.checks label { height: 24px; gap: 5px; margin-bottom: 12px; }
.radios { display: grid; grid-template-columns: 106px 1fr; grid-auto-rows: 24px; row-gap: 10px; width: 220px; }
.radios label { gap: 5px; }
.radios .wide { grid-column: span 2; }
.dates { display: grid; grid-template-columns: 77px 120px; grid-auto-rows: 28px; row-gap: 6px; margin: 4px 0 0 auto; }

.cond { flex: 1; display: flex; padding: 16px 14px 12px 30px; white-space: nowrap; }
.cond-list { flex: 1; display: flex; flex-wrap: wrap; align-content: flex-start; gap: 19px 6px; padding-top: 20px; }
.cond label { display: flex; align-items: center; gap: 5px; }
.cond label:last-child { margin-right: 80px; }
.vscroll { display: flex; flex-direction: column; align-items: center; width: 22px; padding: 10px 0 8px; border-left: 1px solid #d9d9e4; background: #f4f4f8; }
.vscroll b { width: 10px; height: 21px; margin-top: 6px; background: #c9c9da; }
.vscroll i.down { margin-top: auto; }
.red { color: #fb2428; }
.green { color: #22a04a; }
.blue { color: #2440c8; }
.purple { color: #9a1ca6; }

.grid { position: relative; flex: 1; min-height: 0; margin-top: 6px; background: #fff; }
table { border-collapse: separate; border-spacing: 0; table-layout: fixed; width: 100%; }
.c-ind, .c-exp { width: 21px; }
.c-std { width: 157px; }
.c-aud { width: 65px; }
th, td { height: 26px; padding: 0 3px; overflow: hidden; white-space: nowrap; border-right: 1px solid #d3d3de; border-bottom: 1px solid #d3d3de; text-align: left; font-weight: 400; }
th { height: 27px; padding-left: 5px; background: #f4f4f8; }
td:last-child, th:last-child { border-right: 0; }
.n { text-align: right; padding: 0 6px 0 0; }
.ar { font-size: 14px; }
td.ind { padding: 0; background: #f4f4f8; }
.ledger > tbody > tr > td:nth-child(2) { padding: 0 0 0 4px; border-right: 0; }
.ledger .filter td { height: 28px; background: #0078cd; border-right-color: #8cc2ea; padding: 0 3px; }
.ledger .filter .ind { background: #f4f4f8; border-right-color: #d3d3de; }
.ledger .filter .hot { background: #bcdcf4; }
.funnel { display: block; width: 9px; height: 12px; margin: 0 auto; }
.fcell { display: flex; align-items: center; height: 18px; color: #fff; font: 700 9px/14px "Liberation Sans", sans-serif; }
.fcell.dark { color: #6c7f98; }
.fcell b { display: block; width: 8px; height: 14px; border-radius: 1px; color: #dfeeff; text-align: center; }
.fcell .b { background: #2c62b4; }
.fcell .l { background: #4fb0f0; color: #1264a8; }
.fcell .g { background: #5cc08a; color: #1d7a4c; }
.fcell s { width: 12px; height: 5px; margin-left: 4px; border: solid #b9e0fa; border-width: 2px 0; }
.fcell input { flex: 1; min-width: 0; height: 18px; border: 0; padding: 0 4px; background: none; outline: 0; }

.exp { display: block; width: 12px; height: 12px; border: 1px solid #2b2b2d; background: linear-gradient(#2b2b2d, #2b2b2d) center / 6px 2px no-repeat, linear-gradient(#2b2b2d, #2b2b2d) center / 2px 6px no-repeat; }
.exp.minus { background: linear-gradient(#2b2b2d, #2b2b2d) center / 6px 2px no-repeat; }
.ledger .detail > td { height: 53px; }
.detail .blank { border-bottom: 0; background: #fff; }
.ledger .detail > .nest { padding: 0; border-bottom: 0; }
.rowline { height: 27px; margin-bottom: 25px; border-bottom: 1px solid #d3d3de; }
.sub { width: 1321px; }
.sub td { background: #dadada; border-color: #cfcfcf; }
.sub .mid { padding: 0 0 0 22px; }

.grid-scroll { position: absolute; right: 0; top: 55px; bottom: 0; display: flex; flex-direction: column; justify-content: space-between; align-items: center; width: 22px; padding: 9px 0; border-left: 1px solid #dcdce6; background: #f4f4f8; }
.grid-scroll i.up { border-bottom-color: #9a9aa0; }
.grid-scroll i.down { border-top-color: #9a9aa0; }
.ibeam { position: absolute; left: 103px; top: 34px; width: 12px; height: 24px; }
.grid-foot { flex: none; height: 40px; border: solid #d3d3de; border-width: 1px 0; }

.hscroll { display: flex; align-items: center; flex: none; height: 22px; padding: 0 7px; gap: 9px; }
.track { flex: 1; }
.track b { display: block; height: 11px; background: #c9c9da; }
.short .track b { width: 87%; }
.monthly { display: flex; align-items: center; justify-content: space-between; flex: none; height: 29px; margin-top: 4px; padding: 0 10px 0 14px; border: 1px solid #d9d9e4; }
.outer { padding-right: 10px; border-top: 1px solid #dcdce6; }

.status { display: flex; align-items: center; flex: none; height: 32px; padding: 0 4px 0 5px; border-top: 1px solid #7fe0ff; border-bottom: 1px solid #7fe0ff; background: #0078cd; color: #fff; }
.status button { display: flex; align-items: center; gap: 7px; margin-right: 8px; }
.status i.down { border-top-color: #fff; }
.db { display: flex; align-items: center; gap: 6px; margin-left: auto; }
.db svg { width: 18px; height: 18px; }

.taskbar { position: relative; flex: none; display: flex; justify-content: center; height: 64px; background: #1c1c1c; border-top: 1px solid #3c3c3c; }
.apps { display: grid; grid-template-columns: repeat(17, 1fr); width: 980px; margin-left: 3px; padding: 4px 0 5px; }
.apps button { position: relative; display: grid; place-items: center; }
.apps svg { width: 32px; height: 32px; }
.apps .run::after, .apps .tile::after { content: ""; position: absolute; bottom: 1px; width: 8px; height: 4px; border-radius: 2px; background: #9a9a9a; }
.apps .tile { margin: 0 2px; border-radius: 5px; }
.apps .pink { background: #80434a; box-shadow: inset -6px 0 0 #6d3a40, inset 0 0 0 1px #96525a; }
.apps .dark { background: #272727; box-shadow: inset -5px 0 0 #202020, inset 0 0 0 1px #333; }
.apps .tile::after { width: 28px; background: #ff9aa6; }
.apps .dark::after { width: 21px; background: #f47f60; }
.tile em { position: absolute; right: 5px; top: 4px; display: grid; place-items: center; width: 20px; height: 20px; border: 1px solid #5e2226; border-radius: 50%; background: #d22c30; }
.tile u { width: 8px; height: 2px; background: #5a1014; }
.clock { position: absolute; right: 25px; top: 0; bottom: 0; display: flex; align-items: center; gap: 12px; padding-bottom: 3px; color: #fff; }
.clock time { display: block; text-align: right; font-size: 15px; line-height: 21px; }
.clock svg { width: 18px; height: 20px; }
```
